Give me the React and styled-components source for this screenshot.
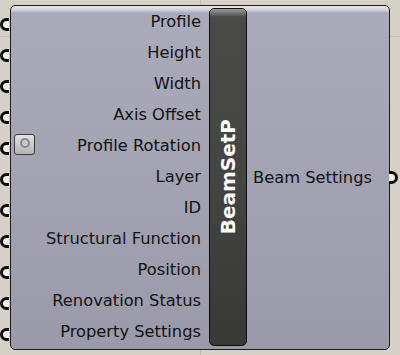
import styled, { createGlobalStyle } from 'styled-components';

const GlobalStyle = createGlobalStyle`
  html, body {
    margin: 0;
    padding: 0;
  }
  body {
    width: 400px;
    height: 355px;
    overflow: hidden;
    font-family: "DejaVu Sans", Verdana, sans-serif;
  }
`;

const inputs = [
  'Profile',
  'Height',
  'Width',
  'Axis Offset',
  'Profile Rotation',
  'Layer',
  'ID',
  'Structural Function',
  'Position',
  'Renovation Status',
  'Property Settings',
];

function App() {
  return (
    <>
      <GlobalStyle />
      <Canvas>
        <Component>
          <InputList>
            {inputs.map((name) => (
              <InputRow key={name}>
                <Port />
                {name === 'Profile Rotation' && (
                  <Toggle>
                    <ToggleKnob />
                  </Toggle>
                )}
                <Label>{name}</Label>
              </InputRow>
            ))}
          </InputList>
          <NameBar>
            <Title>BeamSetP</Title>
          </NameBar>
          <OutputList>
            <OutputRow>
              <Label>Beam Settings</Label>
              <Port $side="right" />
            </OutputRow>
          </OutputList>
        </Component>
      </Canvas>
    </>
  );
}

export default App;

const Canvas = styled.div`
  width: 400px;
  height: 355px;
  box-sizing: border-box;
  padding: 5px 0 0 10px;
  background-color: #d5d1c6;
  background-image:
    linear-gradient(to right, transparent 200px, #c4bfb3 200px, #c4bfb3 201px, transparent 201px),
    linear-gradient(to bottom, transparent 36px, #c4bfb3 36px, #c4bfb3 37px, transparent 37px);
`;

const Component = styled.div`
  width: 380px;
  height: 345px;
  box-sizing: border-box;
  display: flex;
  border: 1px solid #1c1c1c;
  border-radius: 5px;
  background: linear-gradient(
    to bottom,
    #e6e6ec 0px,
    #d2d2dc 4px,
    #aaaabb 7px,
    #a4a4b5 40%,
    #9a9aab 100%
  );
`;

const InputList = styled.div`
  width: 198px;
  display: flex;
  flex-direction: column;
`;

const InputRow = styled.div`
  position: relative;
  height: 31px;
  display: flex;
  align-items: center;
  justify-content: flex-end;
  padding: 0 8px 0 3px;
`;

const Label = styled.span`
  font-size: 16.3px;
  color: #121212;
  white-space: nowrap;
`;

const Port = styled.span`
  position: absolute;
  top: 50%;
  width: 9px;
  height: 13px;
  box-sizing: border-box;
  border: 3px solid #0a0a0a;
  background: #efeee9;
  ${({ $side }) =>
    $side === 'right'
      ? `
    right: -9px;
    border-left: none;
    border-radius: 0 8px 8px 0;
    margin-top: -7px;
  `
      : `
    left: -11px;
    border-right: none;
    border-radius: 8px 0 0 8px;
    margin-top: -4px;
  `}
`;

const Toggle = styled.span`
  margin-right: auto;
  width: 21px;
  height: 21px;
  box-sizing: border-box;
  border: 1px solid #3a3a3a;
  border-radius: 3px;
  background: linear-gradient(to bottom, #e2e2e2, #b4b4b4);
  display: flex;
  justify-content: center;
  padding-top: 3px;
  margin-top: -2px;
`;

const ToggleKnob = styled.span`
  width: 10px;
  height: 10px;
  box-sizing: border-box;
  border-radius: 50%;
  border: 2px solid #8a8a8a;
  background: #c8c8c8;
`;

const NameBar = styled.div`
  width: 38px;
  margin: 2px 0 3px;
  box-sizing: border-box;
  border: 1.5px solid #0e0e0e;
  border-radius: 5px;
  background: linear-gradient(
    to bottom,
    #9a9a98 0px,
    #6a6a68 5px,
    #4a4a48 8px,
    #444442 50%,
    #383836 100%
  );
  display: flex;
  align-items: center;
  justify-content: center;
`;

const Title = styled.span`
  writing-mode: vertical-rl;
  transform: rotate(180deg);
  color: #ffffff;
  font-weight: bold;
  font-size: 20px;
  white-space: nowrap;
`;

const OutputList = styled.div`
  flex: 1;
  display: flex;
  align-items: center;
`;

const OutputRow = styled.div`
  position: relative;
  flex: 1;
  display: flex;
  align-items: center;
  padding-left: 6px;
  height: 31px;
`;
